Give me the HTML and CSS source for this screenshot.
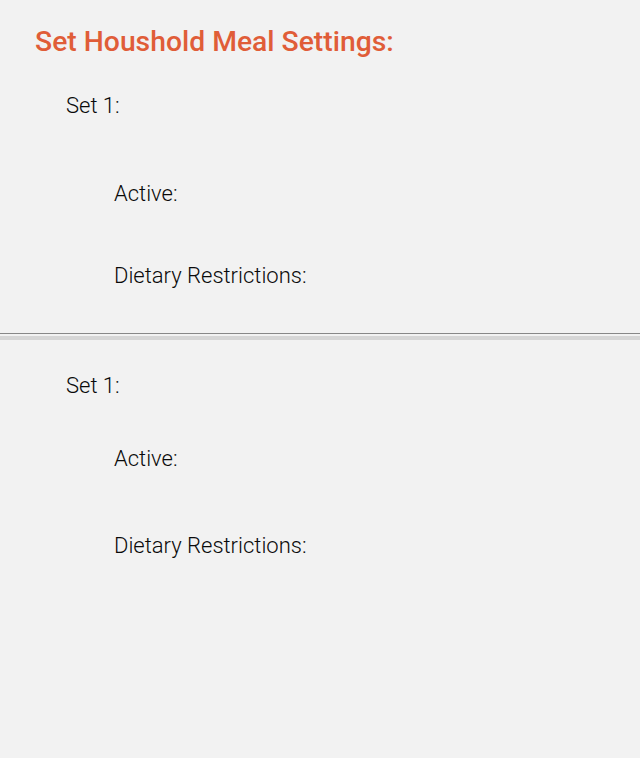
FILE: index.html
```html
<!DOCTYPE html>
<html>
<head>
<meta charset="utf-8">
<link rel="stylesheet" href="styles.css">
</head>
<body>
<main class="page">
  <h1 class="title">Set Houshold Meal Settings:</h1>
  <section class="set set-first">
    <div class="set-label">Set 1:</div>
    <div class="field field-active">Active:</div>
    <div class="field field-diet">Dietary Restrictions:</div>
  </section>
  <div class="divider"></div>
  <section class="set set-second">
    <div class="set-label">Set 1:</div>
    <div class="field field-active">Active:</div>
    <div class="field field-diet">Dietary Restrictions:</div>
  </section>
</main>
</body>
</html>
```

FILE: styles.css
```css
html, body {
  margin: 0;
  padding: 0;
  background: #f2f2f2;
}
.page {
  font-family: Roboto, "Noto Sans", sans-serif;
  color: #0a0a0a;
  min-height: 758px;
  padding-top: 25px;
  box-sizing: border-box;
}
.title {
  margin: 0 0 0 35px;
  font-size: 28.3px;
  line-height: 34px;
  font-weight: 500;
  color: #e05d38;
}
.set {
  display: flex;
  flex-direction: column;
}
.set-label, .field {
  font-size: 22px;
  line-height: 24px;
  font-weight: 300;
}
.set-label {
  margin-left: 66px;
}
.field {
  margin-left: 114px;
}
.set-first {
  margin-top: 35px;
  padding-bottom: 45px;
}
.set-first .field-active { margin-top: 64px; }
.set-first .field-diet { margin-top: 58px; }
.divider {
  height: 1px;
  background: #888;
  border-bottom: 2px solid #f2f2f2;
  box-shadow: 0 3px 0 0 #d6d6d6, 0 4px 0 0 #d6d6d6;
}
.set-second {
  margin-top: 38px;
}
.set-second .field-active { margin-top: 49px; }
.set-second .field-diet { margin-top: 63px; }
```
